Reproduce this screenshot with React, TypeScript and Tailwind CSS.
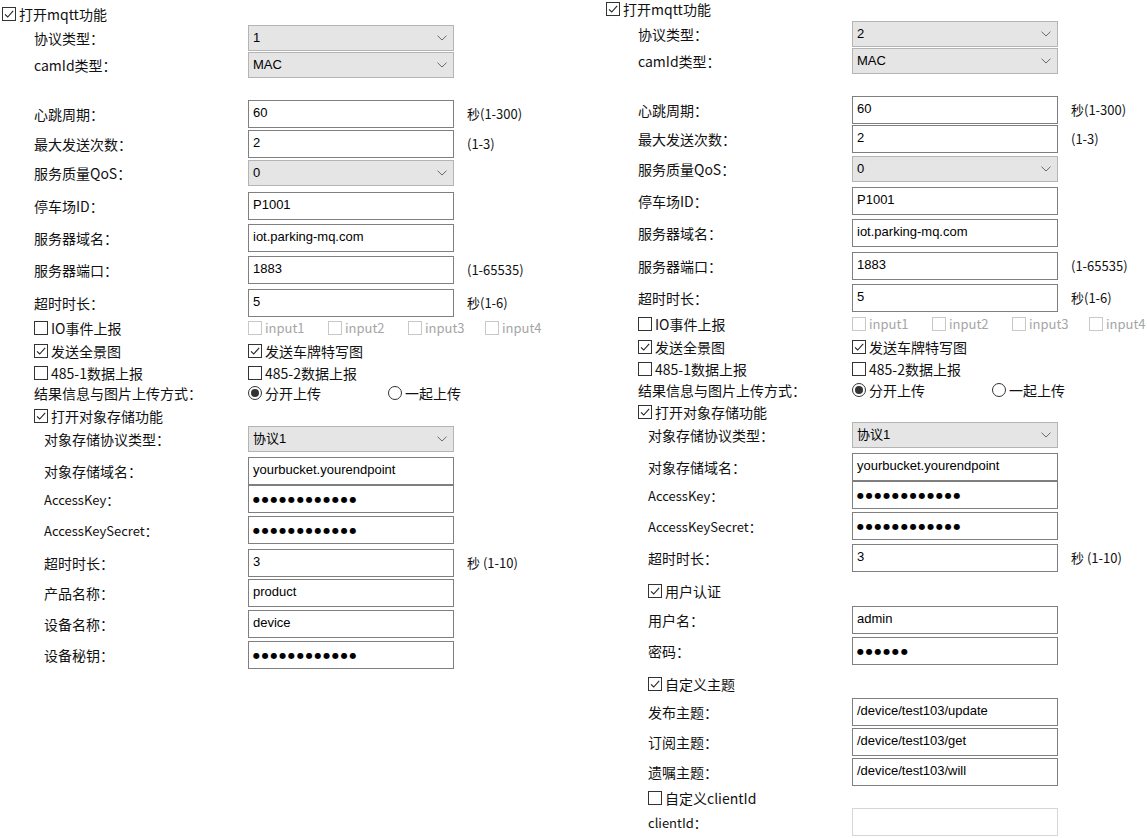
import type { ReactNode } from "react";

const cjk = "font-['Noto_Sans_CJK_SC','Noto_Sans',sans-serif]";
const ui = "font-['Liberation_Sans','Noto_Sans_CJK_SC',sans-serif]";

function Box({ checked, disabled }: { checked?: boolean; disabled?: boolean }) {
    return (
        <span
            className={`flex h-[14px] w-[14px] shrink-0 items-center justify-center border bg-white ${
                disabled ? "border-[#c8c8c8]" : "border-[#333333]"
            }`}
        >
            {checked ? (
                <svg width="12" height="12" viewBox="0 0 12 12">
                    <path d="M2 6.3 L4.7 9 L10.2 2.8" fill="none" stroke="#222" strokeWidth="1.1" />
                </svg>
            ) : null}
        </span>
    );
}

function Check({
    checked,
    disabled,
    children,
    className = "",
}: {
    checked?: boolean;
    disabled?: boolean;
    children: ReactNode;
    className?: string;
}) {
    return (
        <span className={`flex items-center gap-[3px] ${className}`}>
            <Box checked={checked} disabled={disabled} />
            <span className={disabled ? "text-[13px] text-[#a6a6a6]" : "text-[14px] text-[#111]"}>{children}</span>
        </span>
    );
}

function Radio({ checked, children, className = "" }: { checked?: boolean; children: ReactNode; className?: string }) {
    return (
        <span className={`flex items-center gap-[3px] ${className}`}>
            <span className="flex h-[14px] w-[14px] items-center justify-center rounded-full border border-[#333333] bg-white">
                {checked ? <span className="h-[8px] w-[8px] rounded-full bg-[#333333]" /> : null}
            </span>
            <span className="text-[14px] text-[#111]">{children}</span>
        </span>
    );
}

function TextBox({ value, password, disabled }: { value?: string; password?: boolean; disabled?: boolean }) {
    return (
        <div
            className={`h-[28px] w-[206px] shrink-0 border bg-white px-[4px] pt-[4px] text-[13px] leading-[16px] text-black ${ui} ${
                disabled ? "border-[#d6d6d6]" : "border-[#7f7f7f]"
            }`}
        >
            {password ? (
                <span className="font-['DejaVu_Sans',sans-serif] text-[8px] tracking-[1.8px]">{value}</span>
            ) : (
                value
            )}
        </div>
    );
}

function Select({ value }: { value: string }) {
    return (
        <div
            className={`flex h-[26px] w-[206px] shrink-0 items-center justify-between border border-[#b4b4b4] bg-[#e5e5e5] pl-[4px] pr-[6px] text-[13px] text-black ${ui}`}
        >
            <span>{value}</span>
            <svg width="10" height="6" viewBox="0 0 10 6">
                <path d="M0.5 0.7 L5 5 L9.5 0.7" fill="none" stroke="#6a6a6a" strokeWidth="1" />
            </svg>
        </div>
    );
}

function Field({
    label,
    sub,
    suffix,
    className = "",
    children,
}: {
    label: ReactNode;
    sub?: boolean;
    suffix?: string;
    className?: string;
    children: ReactNode;
}) {
    return (
        <div className={`flex items-center pl-[34px] ${className}`}>
            <div className={`w-[214px] shrink-0 text-[14px] text-[#111] ${sub ? "pl-[10px]" : ""}`}>{label}</div>
            {children}
            {suffix ? <span className="ml-[13px] text-[13px] text-[#111]">{suffix}</span> : null}
        </div>
    );
}

const dots12 = "●●●●●●●●●●●●";

function CommonTop({ proto }: { proto: string }) {
    return (
        <>
            <Field label="协议类型：">
                <Select value={proto} />
            </Field>
            <Field label="camId类型：" className="mt-[1px]">
                <Select value="MAC" />
            </Field>
        </>
    );
}

function Options({ className = "" }: { className?: string }) {
    return (
        <div className={`flex h-[20px] items-center pl-[34px] ${className}`}>
            <Check className="w-[214px]">IO事件上报</Check>
            <Check disabled className="w-[80px]">
                input1
            </Check>
            <Check disabled className="w-[80px]">
                input2
            </Check>
            <Check disabled className="w-[77px]">
                input3
            </Check>
            <Check disabled>input4</Check>
        </div>
    );
}

export default function App() {
    return (
        <div className={`flex h-[838px] w-[1147px] overflow-hidden bg-white ${cjk}`}>
            {/* left panel */}
            <div className="flex w-[604px] shrink-0 flex-col pt-[4px]">
                <Check checked className="h-[20px] pl-[2px]">
                    打开mqtt功能
                </Check>
                <div className="mt-[1px] flex flex-col">
                    <CommonTop proto="1" />
                </div>
                <Field label="心跳周期：" suffix="秒(1-300)" className="mt-[22px]">
                    <TextBox value="60" />
                </Field>
                <Field label="最大发送次数：" suffix="(1-3)" className="mt-[2px]">
                    <TextBox value="2" />
                </Field>
                <Field label="服务质量QoS：" className="mt-[2px]">
                    <Select value="0" />
                </Field>
                <Field label="停车场ID：" className="mt-[6px]">
                    <TextBox value="P1001" />
                </Field>
                <Field label="服务器域名：" className="mt-[4px]">
                    <TextBox value="iot.parking-mq.com" />
                </Field>
                <Field label="服务器端口：" suffix="(1-65535)" className="mt-[4px]">
                    <TextBox value="1883" />
                </Field>
                <Field label="超时时长：" suffix="秒(1-6)" className="mt-[5px]">
                    <TextBox value="5" />
                </Field>
                <Options className="mt-[1px]" />
                <div className="mt-[3px] flex h-[20px] items-center pl-[34px]">
                    <Check checked className="w-[214px]">
                        发送全景图
                    </Check>
                    <Check checked>发送车牌特写图</Check>
                </div>
                <div className="mt-[2px] flex h-[20px] items-center pl-[34px]">
                    <Check className="w-[214px]">485-1数据上报</Check>
                    <Check>485-2数据上报</Check>
                </div>
                <div className="flex h-[20px] items-center pl-[34px]">
                    <span className="w-[214px] text-[14px] text-[#111]">结果信息与图片上传方式：</span>
                    <Radio checked className="w-[140px]">
                        分开上传
                    </Radio>
                    <Radio>一起上传</Radio>
                </div>
                <Check checked className="mt-[3px] h-[20px] pl-[34px]">
                    打开对象存储功能
                </Check>
                <Field sub label="对象存储协议类型：">
                    <Select value="协议1" />
                </Field>
                <Field sub label="对象存储域名：" className="mt-[5px]">
                    <TextBox value="yourbucket.yourendpoint" />
                </Field>
                <Field sub label={<span className="text-[13px]">AccessKey：</span>}>
                    <TextBox password value={dots12} />
                </Field>
                <Field sub label={<span className="text-[13px]">AccessKeySecret：</span>} className="mt-[3px]">
                    <TextBox password value={dots12} />
                </Field>
                <Field sub label="超时时长：" suffix="秒 (1-10)" className="mt-[5px]">
                    <TextBox value="3" />
                </Field>
                <Field sub label="产品名称：" className="mt-[2px]">
                    <TextBox value="product" />
                </Field>
                <Field sub label="设备名称：" className="mt-[3px]">
                    <TextBox value="device" />
                </Field>
                <Field sub label="设备秘钥：" className="mt-[3px]">
                    <TextBox password value={dots12} />
                </Field>
            </div>

            {/* right panel */}
            <div className="flex min-w-0 flex-1 flex-col">
                <Check checked className="h-[18px] pl-[2px]">
                    打开mqtt功能
                </Check>
                <div className="mt-[3px] flex flex-col">
                    <CommonTop proto="2" />
                </div>
                <Field label="心跳周期：" suffix="秒(1-300)" className="mt-[22px]">
                    <TextBox value="60" />
                </Field>
                <Field label="最大发送次数：" suffix="(1-3)" className="mt-[1px]">
                    <TextBox value="2" />
                </Field>
                <Field label="服务质量QoS：" className="mt-[3px]">
                    <Select value="0" />
                </Field>
                <Field label="停车场ID：" className="mt-[5px]">
                    <TextBox value="P1001" />
                </Field>
                <Field label="服务器域名：" className="mt-[4px]">
                    <TextBox value="iot.parking-mq.com" />
                </Field>
                <Field label="服务器端口：" suffix="(1-65535)" className="mt-[5px]">
                    <TextBox value="1883" />
                </Field>
                <Field label="超时时长：" suffix="秒(1-6)" className="mt-[4px]">
                    <TextBox value="5" />
                </Field>
                <Options className="mt-[2px]" />
                <div className="mt-[3px] flex h-[20px] items-center pl-[34px]">
                    <Check checked className="w-[214px]">
                        发送全景图
                    </Check>
                    <Check checked>发送车牌特写图</Check>
                </div>
                <div className="mt-[2px] flex h-[20px] items-center pl-[34px]">
                    <Check className="w-[214px]">485-1数据上报</Check>
                    <Check>485-2数据上报</Check>
                </div>
                <div className="mt-[1px] flex h-[20px] items-center pl-[34px]">
                    <span className="w-[214px] text-[14px] text-[#111]">结果信息与图片上传方式：</span>
                    <Radio checked className="w-[140px]">
                        分开上传
                    </Radio>
                    <Radio>一起上传</Radio>
                </div>
                <Check checked className="mt-[2px] h-[20px] pl-[34px]">
                    打开对象存储功能
                </Check>
                <Field sub label="对象存储协议类型：">
                    <Select value="协议1" />
                </Field>
                <Field sub label="对象存储域名：" className="mt-[5px]">
                    <TextBox value="yourbucket.yourendpoint" />
                </Field>
                <Field sub label={<span className="text-[13px]">AccessKey：</span>}>
                    <TextBox password value={dots12} />
                </Field>
                <Field sub label={<span className="text-[13px]">AccessKeySecret：</span>} className="mt-[3px]">
                    <TextBox password value={dots12} />
                </Field>
                <Field sub label="超时时长：" suffix="秒 (1-10)" className="mt-[4px]">
                    <TextBox value="3" />
                </Field>
                <Check checked className="mt-[9px] h-[20px] pl-[44px]">
                    用户认证
                </Check>
                <Field sub label="用户名：" className="mt-[5px]">
                    <TextBox value="admin" />
                </Field>
                <Field sub label="密码：" className="mt-[3px]">
                    <TextBox password value="●●●●●●" />
                </Field>
                <Check checked className="mt-[9px] h-[20px] pl-[44px]">
                    自定义主题
                </Check>
                <Field sub label="发布主题：" className="mt-[4px]">
                    <TextBox value="/device/test103/update" />
                </Field>
                <Field sub label="订阅主题：" className="mt-[2px]">
                    <TextBox value="/device/test103/get" />
                </Field>
                <Field sub label="遗嘱主题：" className="mt-[2px]">
                    <TextBox value="/device/test103/will" />
                </Field>
                <Check className="mt-[2px] h-[20px] pl-[44px]">自定义clientId</Check>
                <Field sub label={<span className="text-[13px]">clientId：</span>}>
                    <TextBox disabled />
                </Field>
            </div>
        </div>
    );
}
